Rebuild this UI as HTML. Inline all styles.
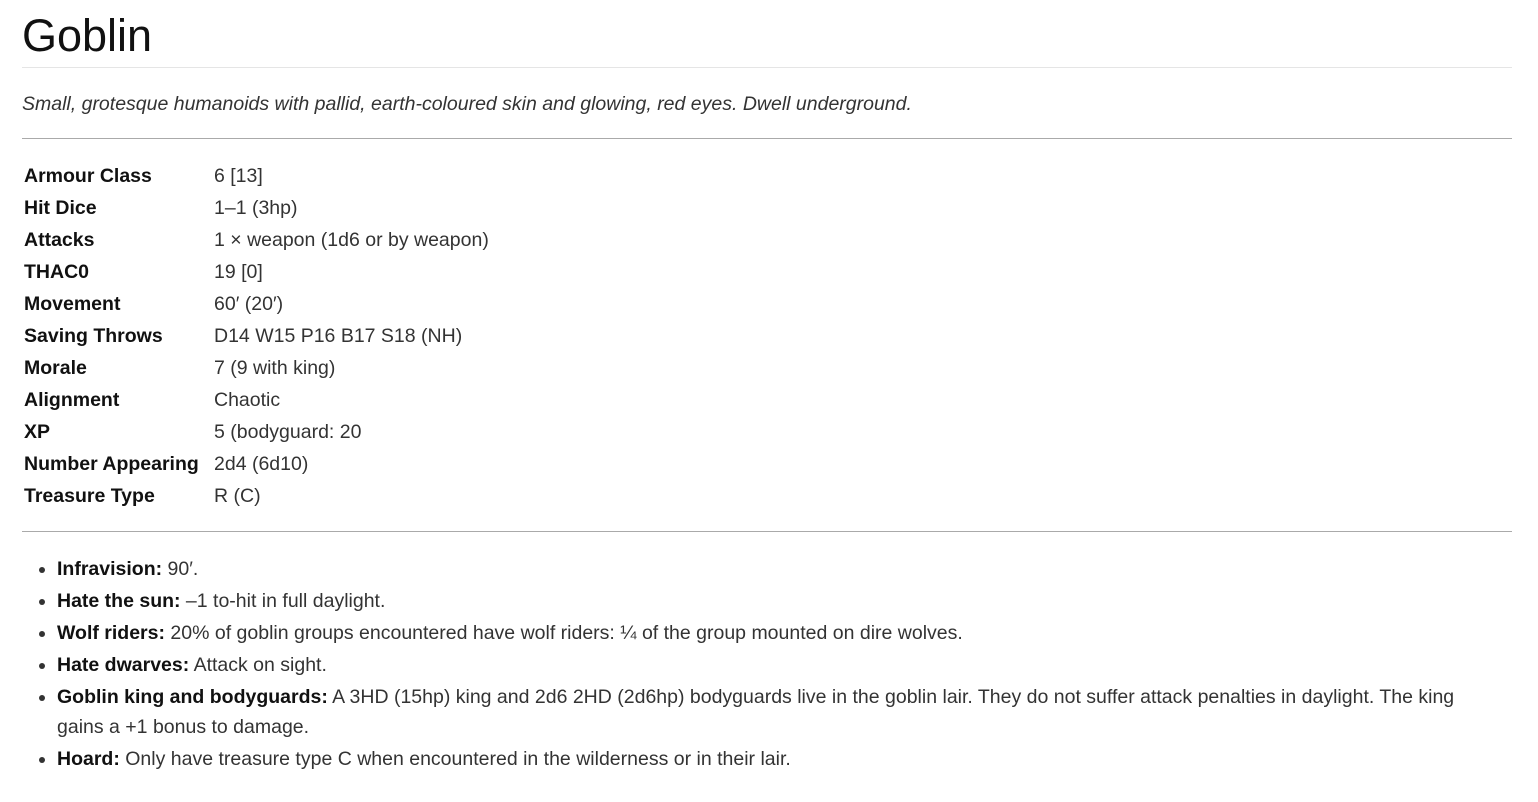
<!DOCTYPE html>
<html><head><meta charset="utf-8"><style>
body{margin:0;background:#fff;color:#212529;font-family:"Liberation Sans",Arial,sans-serif;width:1538px;height:802px;overflow:hidden}
h1{position:absolute;left:22px;top:10px;margin:0;font-size:45px;font-weight:500;line-height:52px;color:#111}
.l1{position:absolute;left:22px;top:67px;width:1490px;border-top:1px solid #e5e5e5}
.it{position:absolute;left:22px;top:91px;font-style:italic;font-size:19.5px;line-height:26px;color:#333}
.hr{position:absolute;left:22px;width:1490px;border-top:1px solid #aaa}
table{position:absolute;left:22px;top:160px;border-collapse:collapse;font-size:19.5px}
td{height:32px;padding:0 0 0 2px;vertical-align:middle;color:#333}
td:first-child{width:188px;font-weight:bold;color:#111}
ul{position:absolute;left:22px;top:554px;margin:0;padding-left:35px;width:1445px;font-size:19.5px;line-height:30px;color:#333}
li{margin-bottom:2px}
b{color:#111}
</style></head><body>
<h1>Goblin</h1>
<div class="l1"></div>
<div class="it">Small, grotesque humanoids with pallid, earth-coloured skin and glowing, red eyes. Dwell underground.</div>
<div class="hr" style="top:138px"></div>
<table>
<tr><td>Armour Class</td><td>6 [13]</td></tr>
<tr><td>Hit Dice</td><td>1–1 (3hp)</td></tr>
<tr><td>Attacks</td><td>1 × weapon (1d6 or by weapon)</td></tr>
<tr><td>THAC0</td><td>19 [0]</td></tr>
<tr><td>Movement</td><td>60′ (20′)</td></tr>
<tr><td>Saving Throws</td><td>D14 W15 P16 B17 S18 (NH)</td></tr>
<tr><td>Morale</td><td>7 (9 with king)</td></tr>
<tr><td>Alignment</td><td>Chaotic</td></tr>
<tr><td>XP</td><td>5 (bodyguard: 20</td></tr>
<tr><td>Number Appearing</td><td>2d4 (6d10)</td></tr>
<tr><td>Treasure Type</td><td>R (C)</td></tr>
</table>
<div class="hr" style="top:531px"></div>
<ul>
<li><b>Infravision:</b> 90′.</li>
<li><b>Hate the sun:</b> –1 to-hit in full daylight.</li>
<li><b>Wolf riders:</b> 20% of goblin groups encountered have wolf riders: ¼ of the group mounted on dire wolves.</li>
<li><b>Hate dwarves:</b> Attack on sight.</li>
<li><b>Goblin king and bodyguards:</b> A 3HD (15hp) king and 2d6 2HD (2d6hp) bodyguards live in the goblin lair. They do not suffer attack penalties in daylight. The king<br>gains a +1 bonus to damage.</li>
<li><b>Hoard:</b> Only have treasure type C when encountered in the wilderness or in their lair.</li>
</ul>
</body></html>
